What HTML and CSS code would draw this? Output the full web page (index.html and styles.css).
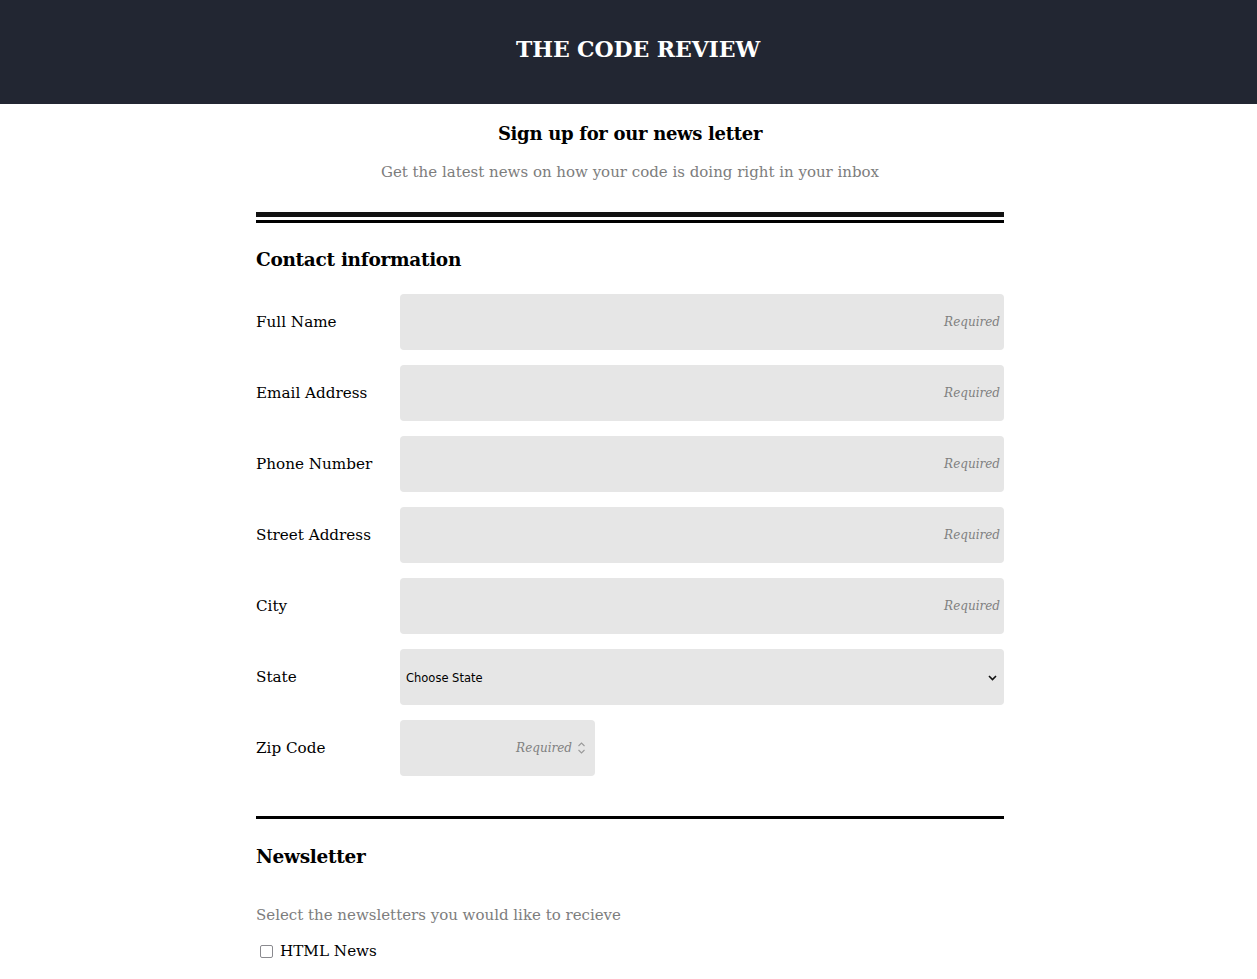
FILE: index.html
```html
<!DOCTYPE html>
<html>
<head>
<meta charset="utf-8">
<link rel="stylesheet" href="styles.css">
</head>
<body>
<header class="site-header">
  <h1 class="site-title">THE CODE REVIEW</h1>
</header>
<main class="container">
  <section class="intro">
    <h2 class="intro-title">Sign up for our news letter</h2>
    <p class="intro-sub">Get the latest news on how your code is doing right in your inbox</p>
  </section>
  <div class="double-rule"><span class="rule-a"></span><span class="rule-b"></span></div>
  <form class="form">
    <h3 class="section-title">Contact information</h3>
    <div class="row"><label class="label">Full Name</label><input class="field" type="text" placeholder="Required"></div>
    <div class="row"><label class="label">Email Address</label><input class="field" type="email" placeholder="Required"></div>
    <div class="row"><label class="label">Phone Number</label><input class="field" type="tel" placeholder="Required"></div>
    <div class="row"><label class="label">Street Address</label><input class="field" type="text" placeholder="Required"></div>
    <div class="row"><label class="label">City</label><input class="field" type="text" placeholder="Required"></div>
    <div class="row"><label class="label">State</label>
      <div class="select">
        <span class="select-text">Choose State</span>
        <svg class="chev" width="9" height="6" viewBox="0 0 9 6"><path d="M1 1 L4.5 4.5 L8 1" fill="none" stroke="#111" stroke-width="1.6"/></svg>
      </div>
    </div>
    <div class="row"><label class="label">Zip Code</label>
      <div class="zip">
        <span class="zip-ph">Required</span>
        <svg class="spin" width="9" height="14" viewBox="0 0 9 14"><path d="M1.5 5 L4.5 2 L7.5 5 M1.5 9 L4.5 12 L7.5 9" fill="none" stroke="#9a9a9a" stroke-width="1.1"/></svg>
      </div>
    </div>
    <hr class="rule">
    <h3 class="section-title news">Newsletter</h3>
    <p class="news-sub">Select the newsletters you would like to recieve</p>
    <label class="check"><span class="box"></span>HTML News</label>
  </form>
</main>
</body>
</html>
```
FILE: styles.css
```css
html, body { margin: 0; padding: 0; }
body { font-family: "DejaVu Serif", "Liberation Serif", serif; color: #000; background: #fff; }
.site-header { background: #222632; height: 104px; display: flex; align-items: center; justify-content: center; padding-left: 19px; padding-bottom: 6px; box-sizing: border-box; }
.site-title { margin: 0; color: #fff; font-size: 22px; font-weight: bold; letter-spacing: -0.1px; }
.container { width: 748px; margin-left: calc(50% - 372.5px); }
.intro { text-align: center; }
.intro-title { margin: 0; padding-top: 17px; font-size: 18px; font-weight: bold; line-height: 26px; letter-spacing: -0.3px; }
.intro-sub { margin: 0; padding-top: 15px; color: #7d7d7d; font-size: 15px; line-height: 20px; }
.double-rule { margin-top: 30px; display: flex; flex-direction: column; gap: 3px; }
.rule-a { display: block; height: 5px; background: #111; }
.rule-b { display: block; height: 3px; background: #000; }
.section-title { margin: 0; font-size: 18.5px; font-weight: bold; line-height: 26px; letter-spacing: -0.3px; }
.form > .section-title:first-child { padding-top: 24px; padding-bottom: 21px; }
.row { display: flex; align-items: center; margin-bottom: 15px; }
.label { width: 144px; font-size: 15.2px; }
.field { flex: 1; height: 56px; border: none; border-radius: 4px; background: #e6e6e6; box-sizing: border-box; padding: 0 4px; text-align: right; font-family: inherit; font-size: 12px; font-style: italic; }
.field::placeholder { color: #808080; font-style: italic; }
.select { flex: 1; height: 56px; border-radius: 4px; background: #e6e6e6; display: flex; align-items: center; justify-content: space-between; padding: 2px 7px 0 6px; box-sizing: border-box; font-family: "DejaVu Sans", sans-serif; font-size: 11.5px; color: #000; }
.chev { display: block; }
.zip { width: 195px; height: 56px; border-radius: 4px; background: #e6e6e6; display: flex; align-items: center; justify-content: flex-end; gap: 5px; padding-right: 9px; box-sizing: border-box; }
.zip-ph { font-size: 12px; font-style: italic; color: #808080; }
.spin { display: block; }
.rule { margin: 40px 0 0; border: none; height: 3px; background: #000; }
.section-title.news { padding-top: 25px; }
.news-sub { margin: 0; padding-top: 35px; color: #7d7d7d; font-size: 15px; line-height: 20px; }
.check { display: flex; align-items: center; gap: 7px; margin-top: 17px; padding-left: 4px; font-size: 15.2px; }
.box { width: 13px; height: 13px; box-sizing: border-box; border: 1.5px solid #8a8a8f; border-radius: 2px; display: inline-block; }
```
